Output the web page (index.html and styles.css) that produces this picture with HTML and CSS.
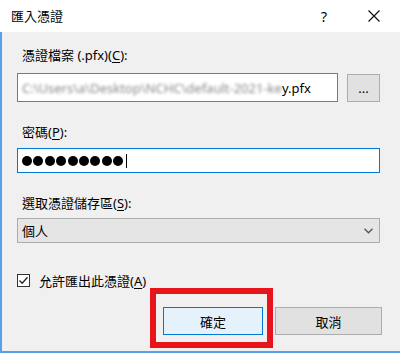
FILE: index.html
```html
<!DOCTYPE html>
<html lang="zh-Hant">
<head>
    <meta charset="UTF-8">
    <meta name="viewport" content="width=device-width, initial-scale=1.0">
    <title>匯入憑證</title>
    <link rel="stylesheet" href="styles.css">
</head>
<body>
    <div class="window">
        <header class="titlebar">
            <span class="title">匯入憑證</span>
            <span class="help">?</span>
            <svg class="close" width="12" height="12" viewBox="0 0 12 12">
                <path d="M0.5 0.5 L11.5 11.5 M11.5 0.5 L0.5 11.5" stroke="#111" stroke-width="1.2" fill="none"/>
            </svg>
        </header>

        <main class="content">
            <div class="field-label">憑證檔案 (.pfx)(<u>C</u>):</div>
            <div class="file-row">
                <div class="textbox file-box"><span class="redacted">C:\Users\a\Desktop\NCHC\default-2021-ke</span><span>y.pfx</span></div>
                <button class="btn browse">...</button>
            </div>

            <div class="field-label gap-big">密碼(<u>P</u>):</div>
            <div class="textbox password">
                <span class="dot"></span><span class="dot"></span><span class="dot"></span>
                <span class="dot"></span><span class="dot"></span><span class="dot"></span>
                <span class="dot"></span><span class="dot"></span><span class="dot"></span>
                <span class="caret"></span>
            </div>

            <div class="field-label gap-big">選取憑證儲存區(<u>S</u>):</div>
            <div class="combo">
                <span class="combo-value">個人</span>
                <svg class="chevron" width="9" height="6" viewBox="0 0 9 6">
                    <path d="M0.5 0.8 L4.5 4.8 L8.5 0.8" stroke="#555" stroke-width="1.3" fill="none"/>
                </svg>
            </div>

            <div class="check-row">
                <span class="checkbox">
                    <svg width="11" height="11" viewBox="0 0 11 11">
                        <path d="M1.5 5.5 L4.2 8.2 L9.5 2.2" stroke="#222" stroke-width="1.3" fill="none"/>
                    </svg>
                </span>
                <span class="check-label">允許匯出此憑證(<u>A</u>)</span>
            </div>

            <div class="actions">
                <div class="highlight">
                    <button class="btn primary">確定</button>
                </div>
                <button class="btn cancel">取消</button>
            </div>
        </main>
    </div>
</body>
</html>
```

FILE: styles.css
```css
html, body {
    margin: 0;
    padding: 0;
}

body {
    width: 400px;
    height: 353px;
    overflow: hidden;
    font-family: "Noto Sans", "Noto Sans CJK TC", sans-serif;
    font-size: 13px;
    color: #000;
    background: #fff;
}

.window {
    display: flex;
    flex-direction: column;
    height: 353px;
}

/* 標題列 */
.titlebar {
    height: 32px;
    flex: none;
    display: flex;
    align-items: center;
    padding-left: 11px;
    background: #fff;
    box-sizing: border-box;
}

.title {
    flex: 1;
    font-size: 13px;
    line-height: 17px;
}

.help {
    font-size: 14px;
    line-height: 17px;
    margin-right: 41px;
}

.close {
    margin-right: 20px;
}

/* 內容區 */
.content {
    flex: 1;
    display: flex;
    flex-direction: column;
    background: #f0f0f0;
    border-left: 2px solid #5a9fe6;
    border-bottom: 2px solid #5a9fe6;
    padding: 15px 20px 0 15px;
}

.field-label {
    line-height: 17px;
    padding-left: 5px;
}

.gap-big {
    margin-top: 22px;
}

u {
    text-underline-offset: 2px;
}

.file-row {
    display: flex;
    gap: 9px;
    margin-top: 9px;
}

.textbox {
    background: #fff;
    border: 1px solid #7a7a7a;
    box-sizing: border-box;
    display: flex;
    align-items: center;
    padding-left: 4px;
}

.file-box {
    flex: 1;
    height: 29px;
    white-space: nowrap;
    overflow: hidden;
}

.redacted {
    color: #888;
    filter: blur(1.4px);
}

.btn {
    font-family: inherit;
    font-size: 13px;
    color: #000;
    background: #e1e1e1;
    border: 1px solid #adadad;
    padding: 0;
    box-sizing: border-box;
}

.browse {
    width: 33px;
    height: 28px;
    margin-top: 1px;
    line-height: 20px;
}

.password {
    height: 25px;
    margin-top: 7px;
    border-color: #0078d7;
}

.dot {
    width: 10px;
    height: 10px;
    border-radius: 50%;
    background: #000;
    margin-right: 1.4px;
}

.caret {
    width: 1px;
    height: 14px;
    background: #000;
    margin-left: 1px;
}

.combo {
    height: 25px;
    margin-top: 6px;
    display: flex;
    align-items: center;
    justify-content: space-between;
    background: #e5e5e5;
    border: 1px solid #acacac;
    box-sizing: border-box;
    padding: 0 6px 0 4px;
}

.check-row {
    display: flex;
    align-items: center;
    height: 16px;
    margin-top: 29px;
    gap: 9px;
}

.checkbox {
    width: 13px;
    height: 13px;
    box-sizing: border-box;
    border: 1px solid #333;
    background: #fff;
    display: flex;
    align-items: center;
    justify-content: center;
}

.actions {
    display: flex;
    justify-content: flex-end;
    align-items: flex-start;
    gap: 2px;
    margin-right: -2px;
}

/* 紅框標示 */
.highlight {
    border: 6px solid #e8141c;
    padding: 13px 4px 7px 7px;
}

.primary {
    width: 100px;
    height: 28px;
    background: #e5f1fb;
    border-color: #0078d7;
}

.cancel {
    width: 107px;
    height: 28px;
    margin-top: 19px;
}
```
